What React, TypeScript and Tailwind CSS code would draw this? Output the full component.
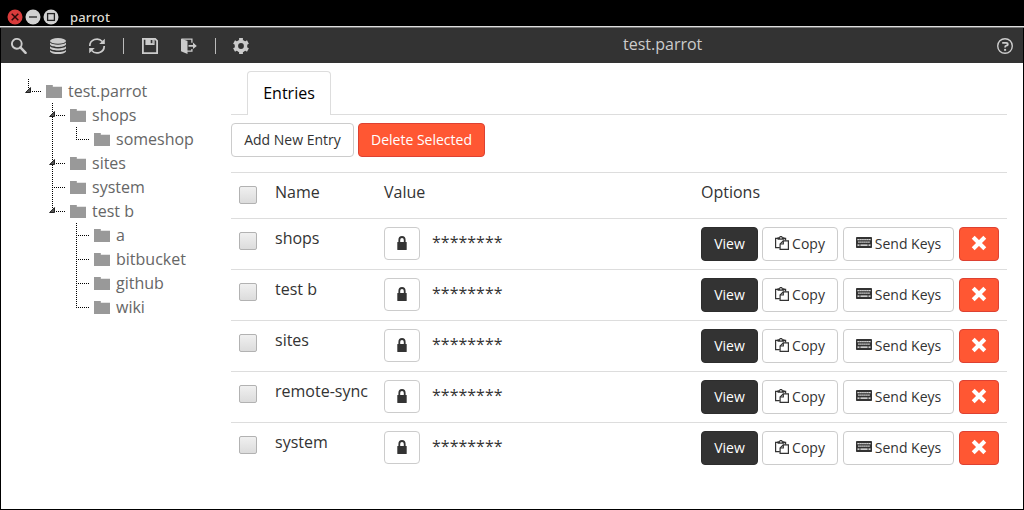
import React from 'react';

type IconProps = { className?: string };

const SearchIcon = ({ className }: IconProps) => (
  <svg className={className} width="17" height="16" viewBox="0 0 17 16" fill="none" stroke="currentColor">
    <circle cx="6.8" cy="5.8" r="4.9" strokeWidth="1.9" />
    <path d="M10.4 9.4 15.6 14.8" strokeWidth="2.5" strokeLinecap="round" />
  </svg>
);

const DatabaseIcon = ({ className }: IconProps) => (
  <svg className={className} width="18" height="16" viewBox="0 0 18 16" fill="currentColor">
    <ellipse cx="9" cy="2.9" rx="8" ry="2.8" />
    <path d="M1 4.6C2.8 7.4 15.2 7.4 17 4.6V6.6C15.6 9.9 2.4 9.9 1 6.6Z" />
    <path d="M1 8.3C2.8 11.1 15.2 11.1 17 8.3V10.2C15.6 13.2 2.4 13.2 1 10.2Z" />
    <path d="M1 11.9C2.8 14.6 15.2 14.6 17 11.9V13.4C15.6 16.8 2.4 16.8 1 13.4Z" />
  </svg>
);

const RefreshIcon = ({ className }: IconProps) => (
  <svg className={className} width="18" height="16" viewBox="0 0 18 16">
    <g fill="none" stroke="currentColor" strokeWidth="1.7">
      <path d="M1.8 8A7.1 6.8 0 0 1 14.3 3.5" />
      <path d="M16.2 8A7.1 6.8 0 0 1 3.7 12.5" />
    </g>
    <path d="M16.8.7V6h-5.6ZM1.2 15.2V10h5.6Z" fill="currentColor" />
  </svg>
);

const SaveIcon = ({ className }: IconProps) => (
  <svg className={className} width="16" height="16" viewBox="0 0 16 16" fill="none" stroke="currentColor">
    <path d="M.9.9h12.3l1.9 1.9v12.3H.9Z" strokeWidth="1.8" />
    <path d="M4 1v5.5h8V1" strokeWidth="1.2" />
    <path d="M4 1h7.6v5.2H4Z" fill="currentColor" stroke="none" />
    <path d="M8.7 2h1.7v3.2H8.7Z" className="fill-[#333333]" stroke="none" />
  </svg>
);

const ExitIcon = ({ className }: IconProps) => (
  <svg className={className} width="16" height="16" viewBox="0 0 16 16">
    <path d="M0 .5 6.5 3v13L0 13.2Z" fill="currentColor" />
    <path d="M1 1.1h9.9v3.6M10.9 10.9v2.3H6" fill="none" stroke="currentColor" strokeWidth="1.3" />
    <path d="M7.5 6.9H12V4.6L15.8 7.9 12 11.1V8.8H7.5Z" fill="currentColor" />
  </svg>
);

const GearIcon = ({ className }: IconProps) => (
  <svg className={className} width="16" height="16" viewBox="0 0 16 16" fill="none" stroke="currentColor">
    <circle cx="8" cy="8" r="4.6" strokeWidth="3.4" />
    <path
      d="M8 0v2.6M8 13.4V16M1.07 4l2.25 1.3M12.68 10.7l2.25 1.3M1.07 12l2.25-1.3M12.68 5.3l2.25-1.3"
      strokeWidth="3.8"
    />
  </svg>
);

const HelpIcon = ({ className }: IconProps) => (
  <svg className={className} width="16" height="16" viewBox="0 0 16 16" fill="none" stroke="currentColor">
    <circle cx="8" cy="8" r="7.3" strokeWidth="1.4" />
    <path d="M5.2 4.9h4.2q1.4 0 1.4 1.3t-1.4 1.4Q8.1 7.7 8.1 9.6" strokeWidth="1.9" />
    <path d="M7.1 10.9h2v1.9h-2Z" fill="currentColor" stroke="none" />
  </svg>
);

const FolderIcon = () => (
  <svg className="mt-px shrink-0 text-[#999999]" width="16" height="13" viewBox="0 0 16 13" fill="currentColor">
    <path d="M0 0h6.8v1.8H16V13H0Z" />
  </svg>
);

const LockIcon = () => (
  <svg width="10" height="14" viewBox="0 0 10 14">
    <path d="M2.3 7V3.9a2.7 2.9 0 0 1 5.4 0V7" fill="none" stroke="currentColor" strokeWidth="1.8" />
    <rect x="0.3" y="6" width="9.4" height="8" rx="0.6" fill="currentColor" />
  </svg>
);

const PasteIcon = () => (
  <svg className="shrink-0" width="14" height="14" viewBox="0 0 14 14" fill="none" stroke="currentColor" strokeWidth="1.2">
    <path d="M4.8 11.6H.6V2.4h2.7M8.7 2.4h1.9v2" />
    <path d="M3.1 3.2V1.9h1.5Q4.8.5 5.9.5t1.4 1.4h1.5v1.3Z" />
    <path d="M8.3 4.8h5.1v8.6H5.1V8Z" />
    <path d="M8.3 4.8V8H5.1" />
  </svg>
);

const KeyboardIcon = () => (
  <svg className="shrink-0" width="16" height="11" viewBox="0 0 16 11">
    <rect width="16" height="11" rx="0.8" fill="currentColor" />
    <g stroke="white" strokeWidth="1.3">
      <path d="M1.5 2.6h13" strokeDasharray="1.3 0.65" />
      <path d="M2.3 5.2h11.4" strokeDasharray="1.3 0.7" />
      <path d="M1.5 8.1h2M4.4 8.1h7.2M12.5 8.1h2" />
    </g>
  </svg>
);

const RemoveIcon = () => (
  <svg width="16" height="16" viewBox="0 0 16 16" stroke="white" strokeWidth="4.1">
    <path d="M2.2 2.2 13.8 13.8M13.8 2.2 2.2 13.8" />
  </svg>
);

type Guide = 'branch' | 'end' | 'through' | 'blank';
type TreeItem = { label: string; guides: Guide[]; open?: boolean };

const tree: TreeItem[] = [
  { label: 'test.parrot', guides: ['end'], open: true },
  { label: 'shops', guides: ['blank', 'branch'], open: true },
  { label: 'someshop', guides: ['blank', 'through', 'end'] },
  { label: 'sites', guides: ['blank', 'branch'], open: true },
  { label: 'system', guides: ['blank', 'branch'] },
  { label: 'test b', guides: ['blank', 'end'], open: true },
  { label: 'a', guides: ['blank', 'blank', 'branch'] },
  { label: 'bitbucket', guides: ['blank', 'blank', 'branch'] },
  { label: 'github', guides: ['blank', 'blank', 'branch'] },
  { label: 'wiki', guides: ['blank', 'blank', 'end'] },
];

const TreeGuide = ({ kind, open }: { kind: Guide; open?: boolean }) => (
  <svg className="shrink-0" width="24" height="24" viewBox="0 0 24 24">
    {kind !== 'blank' && (
      <path
        d={kind === 'end' ? 'M6.5 0V13' : 'M6.5 0V24'}
        stroke="black"
        strokeDasharray="1 1"
      />
    )}
    {(kind === 'branch' || kind === 'end') && (
      <path d="M6 12.5H19" stroke="black" strokeDasharray="1 1" />
    )}
    {open && <path d="M8.5 8.6V13.5H3.6Z" fill="#555555" stroke="#222222" strokeWidth="1" />}
  </svg>
);

const Checkbox = () => (
  <span
    role="checkbox"
    aria-checked="false"
    className="block size-[18px] rounded-[2px] border border-[#b2b2b2] bg-linear-to-b from-[#f0f0f0] to-[#dcdcdc]"
  />
);

const button =
  'flex h-[34px] shrink-0 items-center justify-center rounded border text-sm leading-5 whitespace-nowrap';
const plain = 'border-[#cccccc] bg-white text-[#333333]';
const danger = 'border-[#dd4132] bg-[#ff5733] text-white';
const grid = 'grid grid-cols-[36px_109px_317px_1fr] border-t border-[#dddddd] pl-2 pt-2';

const entries = ['shops', 'test b', 'sites', 'remote-sync', 'system'];

const EntryRow = ({ name }: { name: string }) => (
  <div className={`${grid} h-[51px]`}>
    <div className="pt-[5px]">
      <Checkbox />
    </div>
    <div className="leading-6 -mt-px">{name}</div>
    <div className="flex items-start">
      <button className={`${button} ${plain} w-9 !h-[33px] pb-px`}>
        <LockIcon />
      </button>
      <span className="ml-3 mt-[3px] leading-6">********</span>
    </div>
    <div className="flex items-start">
      <button className={`${button} w-[57px] border-[#2d2d2d] bg-[#333333] text-white`}>View</button>
      <button className={`${button} ${plain} ml-1 w-[76px] gap-[3px]`}>
        <span className="-mt-[3px]">
          <PasteIcon />
        </span>
        Copy
      </button>
      <button className={`${button} ${plain} ml-[5px] w-[111px] gap-[3px]`}>
        <span className="-mt-[3px]">
          <KeyboardIcon />
        </span>
        Send Keys
      </button>
      <button aria-label="Delete" className={`${button} ${danger} ml-[5px] w-10 pb-[2px]`}>
        <RemoveIcon />
      </button>
    </div>
  </div>
);

const TitleBar = () => (
  <header className="flex h-[26px] shrink-0 items-end bg-black pl-[7px]">
    <svg className="mb-[1px]" width="54" height="16" viewBox="0 0 54 16">
      <circle cx="8" cy="8" r="7.5" fill="#d93b3b" />
      <path d="m4.7 4.7 6.6 6.6m0-6.6-6.6 6.6" stroke="#2a0808" strokeWidth="1.5" />
      <circle cx="26" cy="8" r="7.5" fill="#d2d2d2" />
      <path d="M22 8h8" stroke="#555555" strokeWidth="1.8" />
      <circle cx="44" cy="8" r="7.5" fill="#d2d2d2" />
      <rect x="40.6" y="4.6" width="6.8" height="6.8" fill="none" stroke="#222222" strokeWidth="1.3" />
    </svg>
    <span className="ml-[9px] font-['Noto_Sans'] text-[13px] leading-[18px] font-medium tracking-[0.15px] text-[#dfdbd2]">parrot</span>
  </header>
);

const Toolbar = () => (
  <nav className="flex h-[35px] shrink-0 items-start bg-[#333333] pt-[10px] pr-[10px] pl-[9px] text-[#cccccc]">
    <SearchIcon />
    <DatabaseIcon className="ml-[22px]" />
    <RefreshIcon className="ml-[21px]" />
    <span className="ml-[17px] h-4 w-px bg-[#bbbbbb]" />
    <SaveIcon className="ml-[18px]" />
    <ExitIcon className="ml-[23px]" />
    <span className="ml-[18px] h-4 w-px bg-[#bbbbbb]" />
    <GearIcon className="ml-[17px]" />
    <span className="-mt-[6px] ml-[374px] leading-6">test.parrot</span>
    <HelpIcon className="ml-auto" />
  </nav>
);

export default function App() {
  return (
    <div className="flex h-[510px] w-[1024px] flex-col overflow-hidden bg-black font-['Open_Sans',sans-serif] text-base text-[#333333]">
      <TitleBar />
      <div className="h-px shrink-0 bg-[#dedede]" />
      <div className="h-px shrink-0 bg-[#777777]" />
      <div className="mx-px mb-px flex min-h-0 flex-1 flex-col bg-white">
        <Toolbar />
        <div className="flex min-h-0 flex-1">
          <aside className="w-[230px] shrink-0 pt-4 pl-[21px] text-[#666666]">
            {tree.map((item) => (
              <div key={item.label} className="flex h-6 items-center">
                {item.guides.map((kind, i) => (
                  <TreeGuide key={i} kind={kind} open={item.open && i === item.guides.length - 1} />
                ))}
                <FolderIcon />
                <span className="ml-1.5 leading-6">{item.label}</span>
              </div>
            ))}
          </aside>
          <main className="w-[776px] shrink-0 pt-2">
            <div className="flex h-11 border-b border-[#dddddd] pl-4">
              <div className="h-11 w-[84px] rounded-t border border-b-0 border-[#dddddd] bg-white pt-[9px] text-center leading-6 text-black">
                Entries
              </div>
            </div>
            <div className="flex gap-1 pt-2 pb-[15px]">
              <button className={`${button} ${plain} w-[123px]`}>Add New Entry</button>
              <button className={`${button} ${danger} w-[127px]`}>Delete Selected</button>
            </div>
            <div className={`${grid} h-[46px] leading-6`}>
              <div className="pt-[5px]">
                <Checkbox />
              </div>
              <div className="-mt-px">Name</div>
              <div className="-mt-px">Value</div>
              <div className="-mt-px">Options</div>
            </div>
            {entries.map((name) => (
              <EntryRow key={name} name={name} />
            ))}
          </main>
        </div>
      </div>
    </div>
  );
}
